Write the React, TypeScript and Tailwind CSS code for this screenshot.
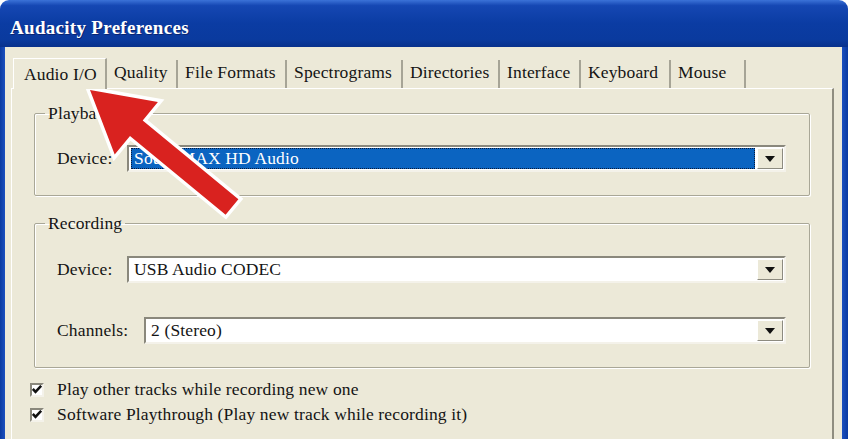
import React from 'react';

const tabs = [
  { label: 'Audio I/O', w: 'w-[94px]', active: true },
  { label: 'Quality', w: 'w-[71px]' },
  { label: 'File Formats', w: 'w-[109px]' },
  { label: 'Spectrograms', w: 'w-[116px]' },
  { label: 'Directories', w: 'w-[97px]' },
  { label: 'Interface', w: 'w-[81px]' },
  { label: 'Keyboard', w: 'w-[90px]' },
  { label: 'Mouse', w: 'w-[75px]' },
];

const DropButton: React.FC = () => (
  <div className="w-[26px] h-full flex items-center justify-center bg-[#ECE9D8] border border-t-white border-l-white border-b-[#8d8b80] border-r-[#8d8b80]">
    <svg width="10" height="6" viewBox="0 0 10 6">
      <path d="M0 0h10L5 6z" fill="#111" />
    </svg>
  </div>
);

interface ComboProps {
  value: string;
  selected?: boolean;
}

const Combo: React.FC<ComboProps> = ({ value, selected }) => (
  <div className="flex-1 h-[27px] flex bg-white border-2 border-t-[#8a887c] border-l-[#8a887c] border-b-[#f4f2ea] border-r-[#f4f2ea] p-[1px]">
    <div className="flex-1 flex items-center pl-[1px] pr-[2px]">
      {selected ? (
        <div className="w-full h-[21px] flex items-center bg-[#0b64c1] border border-dotted border-[#0a1a3a] text-white pl-[2px] leading-none">
          {value}
        </div>
      ) : (
        <span className="pl-[3px] leading-none">{value}</span>
      )}
    </div>
    <DropButton />
  </div>
);

const CheckRow: React.FC<{ label: string }> = ({ label }) => (
  <div className="flex items-center h-[25px]">
    <div className="w-[14px] h-[14px] bg-white border-2 border-t-[#8a887c] border-l-[#8a887c] border-b-[#f4f2ea] border-r-[#f4f2ea] flex items-center justify-center">
      <svg width="10" height="9" viewBox="0 0 10 9">
        <path d="M0.8 4l2.7 2.8L9.2 0.8" stroke="#111" strokeWidth="2.6" fill="none" />
      </svg>
    </div>
    <span className="ml-[13px] leading-none">{label}</span>
  </div>
);

const Group: React.FC<{ title: string; className?: string; children: React.ReactNode }> = ({ title, className, children }) => (
  <fieldset className={`border border-[#a9a797] rounded-[2px] shadow-[inset_1px_1px_0_#fff,1px_1px_0_#fff] ${className ?? ''}`}>
    <legend className="ml-[-12px] px-[3px] leading-[18px]">{title}</legend>
    {children}
  </fieldset>
);

export default function App() {
  return (
    <div className="w-[848px] h-[439px] bg-white relative overflow-hidden font-['Liberation_Serif',serif] text-[17.5px] tracking-[0.15px] text-[#141414]">
      <div className="h-full flex flex-col">
        <div className="h-[47px] rounded-t-[9px] bg-[linear-gradient(to_bottom,#3b72d8_0%,#1547b3_12%,#0b3ca3_50%,#0a3a9e_85%,#08318c_100%)] pl-[10px] pt-[14px]">
          <span className="text-white font-bold text-[19px] tracking-[0.3px] [text-shadow:1px_1px_0_#0a2470]">Audacity Preferences</span>
        </div>
        <div className="flex-1 flex">
          <div className="w-[5px] bg-[linear-gradient(to_right,#0a3aa0,#1b50c0)]" />
          <div className="flex-1 bg-[#ECE9D8] pl-[6px] pr-[8px] pt-[10px] flex flex-col">
            <div className="flex items-end h-[31px] pl-[2px] relative z-10">
              {tabs.map((t) =>
                t.active ? (
                  <div
                    key={t.label}
                    className={`${t.w} h-[31px] pl-[10px] pt-[5px] bg-[#ECE9D8] border-l border-t border-white border-r-2 border-r-[#a6a496] mb-[-1px] leading-[20px]`}
                  >
                    {t.label}
                  </div>
                ) : (
                  <div
                    key={t.label}
                    className={`${t.w} h-[28px] pl-[7px] pt-[2px] border-r-2 border-r-[#a6a496] leading-[20px]`}
                  >
                    {t.label}
                  </div>
                )
              )}
            </div>
            <div className="flex-1 border-l border-t border-white border-r-2 border-r-[#8f8d80] pl-[22px] pr-[22px] pt-[15px]">
              <Group title="Playback" className="pl-[22px] pr-[23px] pt-[23px] pb-[23px]">
                <div className="flex items-center">
                  <span className="w-[70px] shrink-0">Device:</span>
                  <Combo value="SoundMAX HD Audio" selected />
                </div>
              </Group>
              <Group title="Recording" className="mt-[18px] pl-[22px] pr-[23px] pt-[24px] pb-[23px]">
                <div className="flex items-center">
                  <span className="w-[70px] shrink-0">Device:</span>
                  <Combo value="USB Audio CODEC" />
                </div>
                <div className="flex items-center mt-[34px]">
                  <span className="w-[87px] shrink-0">Channels:</span>
                  <Combo value="2 (Stereo)" />
                </div>
              </Group>
              <div className="mt-[9px] ml-[-4px]">
                <CheckRow label="Play other tracks while recording new one" />
                <CheckRow label="Software Playthrough (Play new track while recording it)" />
              </div>
            </div>
          </div>
          <div className="w-[6px] bg-[linear-gradient(to_right,#1b50c0,#0a3aa0)]" />
        </div>
      </div>
      <svg className="absolute left-0 top-0 pointer-events-none" width="848" height="439">
        <polygon
          points="90,90 157.9,102 142.7,120.5 238.4,199.3 225.6,214.7 130,135.9 114.7,154.4"
          fill="#d9221f"
          stroke="#fff"
          strokeWidth="7"
          strokeLinejoin="miter"
          strokeMiterlimit="4"
          paintOrder="stroke"
        />
      </svg>
    </div>
  );
}
